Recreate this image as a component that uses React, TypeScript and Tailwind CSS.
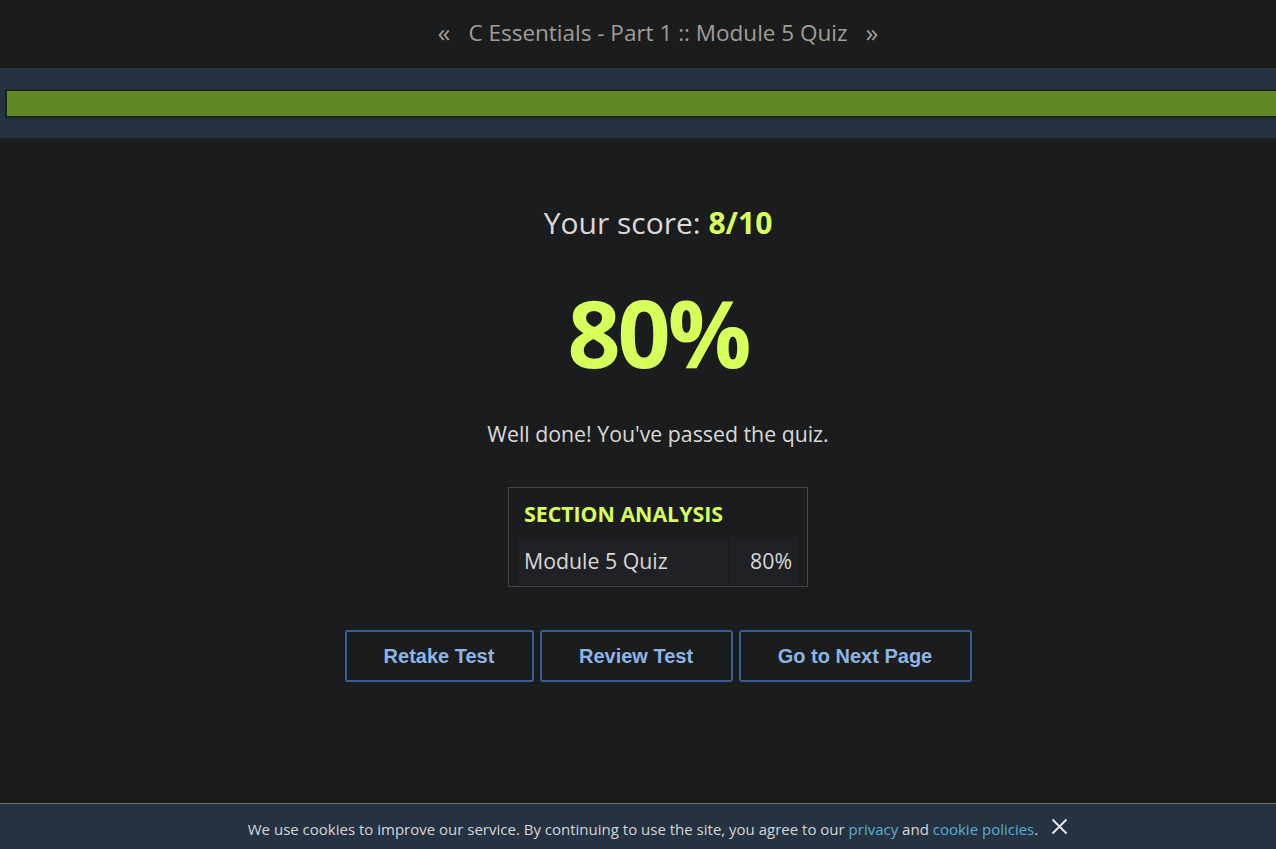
import React from "react";

export default function App() {
  const font = { fontFamily: '"Open Sans", "Noto Sans", sans-serif' };
  return (
    <div className="w-[1276px] h-[849px] bg-[#1b1c1e] flex flex-col overflow-hidden relative" style={font}>
      <div className="h-[68px] flex items-center justify-center pl-[40px] pb-[3px] text-[#a29d97] text-[22.5px] gap-[18px]">
        <span className="text-[26px] leading-none -mt-[2px]">«</span>
        <span>C Essentials - Part 1 :: Module 5 Quiz</span>
        <span className="text-[26px] leading-none -mt-[2px]">»</span>
      </div>
      <div className="h-[70px] bg-[#253241] pt-[21px] pl-[5px]">
        <div className="h-[29px] border-2 border-r-0 border-[#18250f] bg-[#5f8926]" />
      </div>
      <div className="flex flex-col items-center pl-[40px]">
        <div className="mt-[64px] text-[30px] leading-[42px] text-[#d9d9d9]">
          Your score: <span className="font-bold text-[#d6ff5c]">8/10</span>
        </div>
        <div className="mt-[36px] text-[93px] leading-[104px] font-bold text-[#d6ff5c] tracking-[-3px]">80%</div>
        <div className="mt-[36px] text-[21.3px] leading-[28px] text-[#d9d9d9]">Well done! You've passed the quiz.</div>
        <div className="mt-[39px] w-[300px] border border-[#444649] px-[8px] pb-[1px]">
          <div className="h-[49px] flex items-center pl-[7px] pt-[3px] text-[21.3px] font-bold text-[#d6ff5c]">SECTION ANALYSIS</div>
          <div className="h-[48px] flex bg-[#1f2124] text-[21.3px] text-[#d9d9d9]">
            <div className="flex-1 flex items-center pl-[7px] pb-[1px]">Module 5 Quiz</div>
            <div className="w-[1px] bg-[#1b1c1e]" />
            <div className="w-[70px] flex items-center justify-end pr-[7px] pb-[1px]">80%</div>
          </div>
        </div>
        <div className="mt-[43px] flex gap-[6px]" style={{ fontFamily: '"Liberation Sans", Arial, sans-serif' }}>
          {[
            ["Retake Test", "w-[189px]"],
            ["Review Test", "w-[193px]"],
            ["Go to Next Page", "w-[233px]"],
          ].map(([t, w]) => (
            <button
              key={t}
              className={`${w} h-[52px] rounded-[3px] border-2 border-[#3c5f91] bg-[#1b1c1e] text-[#8db5e6] text-[20px] font-bold`}
            >
              {t}
            </button>
          ))}
        </div>
      </div>
      <div className="absolute left-0 bottom-0 w-full h-[46px] bg-[#253241] border-t border-[#6b6f73] flex items-center justify-center pl-[40px] pt-[5px] text-[15px] text-[#d6d6d6]">
        <span>
          We use cookies to improve our service. By continuing to use the site, you agree to our{" "}
          <span className="text-[#5aaed3]">privacy</span> and <span className="text-[#5aaed3]">cookie policies</span>.
        </span>
        <span className="ml-[13px] -mt-[6px] text-[#e6e6e6]">
          <svg width="17" height="17" viewBox="0 0 17 17" stroke="currentColor" strokeWidth="2">
            <path d="M1.5 1.5 L15.5 15.5 M15.5 1.5 L1.5 15.5" />
          </svg>
        </span>
      </div>
    </div>
  );
}
